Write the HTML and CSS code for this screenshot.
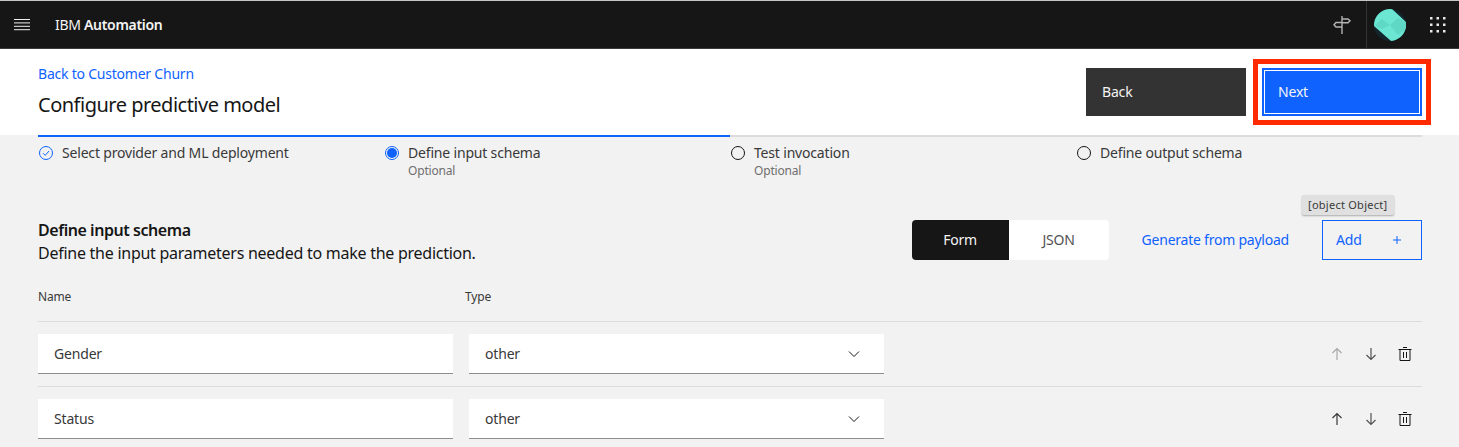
FILE: index.html
```html
<!DOCTYPE html>
<html>
<head>
    <title>Configure predictive model</title>
    <link rel="stylesheet" href="styles.css">
</head>
<body>
    <header class="topbar">
        <svg class="menu-icon" width="16" height="12" viewBox="0 0 16 12"><path d="M0 .5h16M0 3.900h16M0 7.300h16M0 10.700h16" stroke="#f0f0f0" stroke-width="1" fill="none"/></svg>
        <div class="brand">IBM <b>Automation</b></div>
        <div class="topbar-right">
            <svg class="sign-icon" width="20" height="20" viewBox="0 0 20 20" fill="none" stroke="#b4b4b4" stroke-width="1.400"><path d="M10 1v18"/><path d="M10 4h6l2 1.800-2 2h-6"/><path d="M10 7.500H4L2 9.700 4 12h6"/></svg>
            <div class="avatar-wrap">
                <svg width="32" height="32" viewBox="0 0 32 32"><defs><clipPath id="disc"><circle cx="16" cy="16" r="16"/></clipPath></defs><g clip-path="url(#disc)"><rect width="32" height="32" fill="#13262d"/><path d="M0 0H18L32 13V32H17L0 17z" fill="#6ae6d2"/><path d="M0 17 8 10 16 16 24 9 32 13V20L24 26 16 16 8 20z" fill="#5fd9c6"/></g></svg>
            </div>
            <svg class="grid-icon" width="16" height="16" viewBox="0 0 16 16" fill="#e8e8e8"><rect x="0" y="0" width="2.500" height="2.500"/><rect x="6.500" y="0" width="2.500" height="2.500"/><rect x="13" y="0" width="2.500" height="2.500"/><rect x="0" y="6.500" width="2.500" height="2.500"/><rect x="6.500" y="6.500" width="2.500" height="2.500"/><rect x="13" y="6.500" width="2.500" height="2.500"/><rect x="0" y="13" width="2.500" height="2.500"/><rect x="6.500" y="13" width="2.500" height="2.500"/><rect x="13" y="13" width="2.500" height="2.500"/></svg>
        </div>
    </header>

    <section class="page-head">
        <div class="head-text">
            <a class="link back-link">Back to Customer Churn</a>
            <h1>Configure predictive model</h1>
        </div>
        <div class="head-actions">
            <button class="btn btn-back">Back</button>
            <button class="btn btn-next">Next</button>
        </div>
    </section>

    <main class="content">
        <div class="progress">
            <div class="step step-done">
                <svg width="16" height="16" viewBox="0 0 16 16" fill="none" stroke="#0f62fe"><circle cx="8" cy="8" r="6.500"/><path d="M5 8.200l2.200 2.200L11 6"/></svg>
                <div><div class="step-label">Select provider and ML deployment</div></div>
            </div>
            <div class="step step-current">
                <svg width="16" height="16" viewBox="0 0 16 16"><circle cx="8" cy="8" r="6.500" fill="none" stroke="#0f62fe"/><circle cx="8" cy="8" r="5" fill="#0f62fe"/></svg>
                <div><div class="step-label">Define input schema</div><div class="step-note">Optional</div></div>
            </div>
            <div class="step">
                <svg width="16" height="16" viewBox="0 0 16 16"><circle cx="8" cy="8" r="6.500" fill="none" stroke="#161616"/></svg>
                <div><div class="step-label">Test invocation</div><div class="step-note">Optional</div></div>
            </div>
            <div class="step">
                <svg width="16" height="16" viewBox="0 0 16 16"><circle cx="8" cy="8" r="6.500" fill="none" stroke="#161616"/></svg>
                <div><div class="step-label">Define output schema</div></div>
            </div>
        </div>

        <div class="schema-head">
            <div>
                <h2>Define input schema</h2>
                <p>Define the input parameters needed to make the prediction.</p>
            </div>
            <div class="schema-actions">
                <div class="toggle">
                    <span class="toggle-item toggle-on">Form</span>
                    <span class="toggle-item">JSON</span>
                </div>
                <a class="link generate">Generate from payload</a>
                <div class="add-wrap">
                    <div class="tooltip">[object Object]</div>
                    <button class="add-btn">Add
                        <svg width="16" height="16" viewBox="0 0 16 16" stroke="#0f62fe" fill="none"><path d="M8 4v8M4 8h8"/></svg>
                    </button>
                </div>
            </div>
        </div>

        <div class="col-heads">
            <span class="col-name">Name</span>
            <span>Type</span>
        </div>

        <div class="row">
            <div class="field">Gender</div>
            <div class="field field-select">other
                <svg width="16" height="16" viewBox="0 0 16 16" fill="none" stroke="#161616"><path d="M3 5.500l5 5 5-5"/></svg>
            </div>
            <div class="row-icons">
                <svg width="16" height="16" viewBox="0 0 16 16" fill="none" stroke="#a8a8a8" stroke-width="1.200"><path d="M8 14V2.500M3.500 7 8 2.500 12.500 7"/></svg>
                <svg width="16" height="16" viewBox="0 0 16 16" fill="none" stroke="#525252" stroke-width="1.200"><path d="M8 2v11.500M3.500 9 8 13.500 12.500 9"/></svg>
                <svg width="16" height="16" viewBox="0 0 16 16" fill="none" stroke="#161616"><path d="M1.500 3.500h13M6 1.500h4M3 3.500v11h10v-11M6.500 6v6M9.500 6v6"/></svg>
            </div>
        </div>
        <div class="row">
            <div class="field">Status</div>
            <div class="field field-select">other
                <svg width="16" height="16" viewBox="0 0 16 16" fill="none" stroke="#161616"><path d="M3 5.500l5 5 5-5"/></svg>
            </div>
            <div class="row-icons">
                <svg width="16" height="16" viewBox="0 0 16 16" fill="none" stroke="#393939" stroke-width="1.200"><path d="M8 14V2.500M3.500 7 8 2.500 12.500 7"/></svg>
                <svg width="16" height="16" viewBox="0 0 16 16" fill="none" stroke="#525252" stroke-width="1.200"><path d="M8 2v11.500M3.500 9 8 13.500 12.500 9"/></svg>
                <svg width="16" height="16" viewBox="0 0 16 16" fill="none" stroke="#161616"><path d="M1.500 3.500h13M6 1.500h4M3 3.500v11h10v-11M6.500 6v6M9.500 6v6"/></svg>
            </div>
        </div>
    </main>
</body>
</html>
```

FILE: styles.css
```css
body {
    margin: 0;
    height: 447px;
    overflow: hidden;
    background-color: #f2f2f2;
    color: #161616;
    font-family: "Noto Sans", sans-serif;
    font-size: 14px;
    letter-spacing: -0.18px;
}

.topbar {
    display: flex;
    align-items: center;
    height: 47px;
    background-color: #161616;
    border-top: 1px solid #c6c6c6;
    border-bottom: 1px solid #3a3a3a;
    padding-left: 14px;
}

.menu-icon {
    margin-top: 1px;
}

.brand {
    margin-left: 25px;
    color: #f4f4f4;
    font-size: 14px;
    letter-spacing: -0.3px;
}

.brand b {
    font-weight: 600;
}

.topbar-right {
    display: flex;
    align-items: center;
    height: 100%;
    margin-left: auto;
}

.sign-icon {
    margin-right: 14px;
}

.avatar-wrap {
    display: flex;
    align-items: center;
    height: 100%;
    padding: 0 9px 0 7px;
    border-left: 1px solid #333;
}

.grid-icon {
    margin: 0 13px 0 15px;
}

.page-head {
    display: flex;
    justify-content: space-between;
    height: 86px;
    padding: 0 37px 0 38px;
    background-color: #fff;
}

.link {
    color: #0f62fe;
}

.back-link {
    display: block;
    margin-top: 16px;
    font-size: 14px;
    line-height: 18px;
    letter-spacing: -0.22px;
}

h1 {
    margin: 8px 0 0;
    font-size: 20px;
    font-weight: 400;
    line-height: 28px;
    letter-spacing: -0.5px;
}

.head-actions {
    display: flex;
    gap: 16px;
    padding-top: 19px;
}

.btn {
    width: 160px;
    height: 48px;
    padding: 0 16px 2px;
    border: 0;
    color: #f4f4f4;
    font-family: inherit;
    font-size: 14px;
    letter-spacing: inherit;
    text-align: left;
}

.btn-back {
    background-color: #333;
}

.btn-next {
    background-color: #0f62fe;
    box-shadow: inset 0 0 0 2px #0f62fe, inset 0 0 0 3px #fff;
    outline: 5px solid #ff2a00;
    outline-offset: 4px;
}

.content {
    padding: 0 37px 0 38px;
}

.progress {
    display: grid;
    grid-template-columns: repeat(4, 346px);
    width: 1384px;
    height: 84px;
    background: linear-gradient(to right, #0f62fe 692px, #dcdcdc 692px) top left / 100% 2px no-repeat;
}

.step {
    display: flex;
    gap: 8px;
    padding-top: 9px;
}

.step svg {
    margin-top: 1px;
}

.step-label {
    line-height: 18px;
    color: #393939;
}

.step-note {
    font-size: 12px;
    line-height: 18px;
    color: #6f6f6f;
}

.schema-head {
    display: flex;
    justify-content: space-between;
    align-items: flex-start;
}

h2 {
    margin: 0;
    padding-top: 1px;
    font-size: 16px;
    font-weight: 600;
    line-height: 21px;
    letter-spacing: -0.45px;
}

.schema-head p {
    margin: 1px 0 0;
    font-size: 16px;
    line-height: 22px;
    letter-spacing: -0.26px;
}

.schema-actions {
    display: flex;
    align-items: center;
    height: 40px;
    margin-top: 1px;
}

.toggle {
    display: flex;
    height: 40px;
    width: 197px;
    background-color: #fff;
    border-radius: 4px;
    overflow: hidden;
}

.toggle-item {
    display: flex;
    flex: 1;
    align-items: center;
    justify-content: center;
    padding-bottom: 2px;
    color: #525252;
}

.toggle-on {
    flex: 0 0 97px;
    background-color: #161616;
    color: #f4f4f4;
}

.generate {
    margin: 0 33px;
    padding-bottom: 2px;
    letter-spacing: -0.23px;
}

.add-wrap {
    position: relative;
}

.add-btn {
    display: flex;
    align-items: center;
    justify-content: space-between;
    box-sizing: border-box;
    width: 100px;
    height: 40px;
    padding: 0 16px 2px 13px;
    background: none;
    border: 1px solid #0f62fe;
    color: #0f62fe;
    font-family: inherit;
    font-size: 14px;
    letter-spacing: inherit;
}

.add-btn svg {
    margin-top: 2px;
}

.tooltip {
    position: absolute;
    left: -20px;
    top: -25px;
    padding: 0 7px 0 6px;
    height: 20px;
    line-height: 20px;
    background-color: #e0e0e0;
    border-radius: 2px;
    box-shadow: 0 1px 2px rgba(0, 0, 0, 0.3);
    color: #393939;
    font-size: 11px;
    letter-spacing: 0.26px;
    white-space: nowrap;
}

.col-heads {
    display: flex;
    height: 41px;
    margin-top: 16px;
    border-bottom: 1px solid #dcdcdc;
    font-size: 12px;
    line-height: 34px;
    color: #393939;
}

.col-name {
    width: 427px;
}

.row {
    display: flex;
    gap: 16px;
    align-items: center;
    height: 64px;
    border-bottom: 1px solid #dcdcdc;
}

.field {
    display: flex;
    align-items: center;
    justify-content: space-between;
    box-sizing: border-box;
    width: 415px;
    height: 40px;
    padding: 0 22px 0 16px;
    background-color: #fff;
    border-bottom: 1px solid #8d8d8d;
    color: #393939;
}

.row-icons {
    display: flex;
    gap: 18px;
    margin-left: auto;
    padding-right: 9px;
}
```
